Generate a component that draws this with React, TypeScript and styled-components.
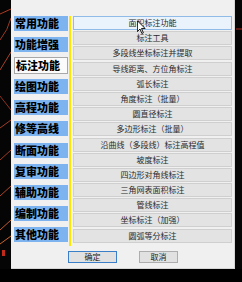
import React from 'react';
import styled, { createGlobalStyle } from 'styled-components';

const GlobalStyle = createGlobalStyle`
  html, body {
    margin: 0;
    padding: 0;
    background: #000;
    width: 242px;
    height: 282px;
    overflow: hidden;
  }
`;

const Screen = styled.div`
  display: flex;
  flex-direction: column;
  width: 242px;
  height: 282px;
  background: #000;
  position: relative;
`;

const Row = styled.div`
  display: flex;
  height: 269px;
`;

const SideCanvas = styled.svg`
  flex: none;
  display: block;
`;

const Dialog = styled.div`
  width: 224px;
  height: 269px;
  box-sizing: border-box;
  background: #f0f0f0;
  border-right: 1px solid #d6d6d6;
  border-bottom: 1px solid #d6d6d6;
  display: flex;
  flex-direction: column;
  padding: 16px 2px 0 3px;
  font-family: 'Noto Sans CJK SC', 'Noto Sans', sans-serif;
`;

const Body = styled.div`
  display: flex;
  align-items: flex-start;
`;

const TabColumn = styled.div`
  width: 54px;
  display: flex;
  flex-direction: column;
  gap: 6.1px;
`;

const Tab = styled.div<{ $active?: boolean }>`
  height: ${(p) => (p.$active ? '17px' : '15px')};
  margin: ${(p) => (p.$active ? '-1px 0' : '0')};
  box-sizing: border-box;
  background: ${(p) => (p.$active ? '#fbfbfb' : '#7db4ef')};
  border: ${(p) => (p.$active ? '1px solid #a8a8a8' : 'none')};
  display: flex;
  align-items: center;
  padding-left: 1px;
  font-size: 11px;
  font-weight: 900;
  color: #000;
  line-height: 1;
  white-space: nowrap;
`;

const Divider = styled.div`
  width: 2px;
  height: 230px;
  background: #ffe600;
  margin: 0 2px 0 1px;
`;

const ButtonColumn = styled.div`
  width: 159px;
  display: flex;
  flex-direction: column;
  gap: 1.2px;
`;

const FuncButton = styled.div<{ $hover?: boolean }>`
  height: 14px;
  box-sizing: border-box;
  background: ${(p) => (p.$hover ? '#eaf3fb' : '#e3e3e3')};
  border: 1px solid ${(p) => (p.$hover ? '#8fbbe6' : '#cfcfcf')};
  display: flex;
  align-items: center;
  justify-content: center;
  font-size: 8px;
  color: #2a2a2a;
  line-height: 1;
  white-space: nowrap;
`;

const Footer = styled.div`
  display: flex;
  gap: 22px;
  padding-left: 54px;
  margin-top: 5px;
`;

const DialogButton = styled.div<{ $primary?: boolean; $w: number }>`
  width: ${(p) => p.$w}px;
  height: 12px;
  box-sizing: border-box;
  background: #e1e1e1;
  border: 1px solid ${(p) => (p.$primary ? '#3b7fc8' : '#adadad')};
  display: flex;
  align-items: center;
  justify-content: center;
  font-size: 8px;
  color: #222;
  line-height: 1;
`;

const Cursor = styled.svg`
  position: absolute;
  left: 137px;
  top: 20px;
`;

const tabs = [
  '常用功能',
  '功能增强',
  '标注功能',
  '绘图功能',
  '高程功能',
  '修等高线',
  '断面功能',
  '复审功能',
  '辅助功能',
  '编制功能',
  '其他功能',
];

const funcs = [
  '面积标注功能',
  '标注工具',
  '多段线坐标标注并提取',
  '导线距离、方位角标注',
  '弧长标注',
  '角度标注（批量）',
  '圆直径标注',
  '多边形标注（批量）',
  '沿曲线（多段线）标注高程值',
  '坡度标注',
  '四边形对角线标注',
  '三角网表面积标注',
  '管线标注',
  '坐标标注（加强）',
  '圆弧等分标注',
];

export default function App() {
  return (
    <Screen>
      <GlobalStyle />
      <Row>
        <SideCanvas width="11" height="269" viewBox="0 0 11 269">
          <rect width="11" height="269" fill="#050505" />
          <path d="M0 14 L11 9" stroke="#b23a1e" strokeWidth="1" fill="none" />
          <path d="M0 40 Q8 30 11 18" stroke="#9c3a22" strokeWidth="1" fill="none" />
          <path d="M0 70 L11 52" stroke="#a8422a" strokeWidth="1" fill="none" />
          <path d="M0 96 L11 110" stroke="#8d3320" strokeWidth="1" fill="none" />
          <path d="M0 128 L11 120" stroke="#a33c26" strokeWidth="1" fill="none" />
          <path d="M0 160 L11 150" stroke="#a03a24" strokeWidth="1" fill="none" />
          <path d="M0 196 L11 186" stroke="#b0452a" strokeWidth="1" fill="none" />
          <path d="M0 230 L11 220" stroke="#c45a2c" strokeWidth="1" fill="none" />
          <path d="M0 244 L11 236" stroke="#c8662c" strokeWidth="1" fill="none" />
          <rect x="2" y="250" width="3" height="6" fill="#c02a1a" />
        </SideCanvas>
        <Dialog>
          <Body>
            <TabColumn>
              {tabs.map((t, i) => (
                <Tab key={t} $active={i === 2}>
                  {t}
                </Tab>
              ))}
            </TabColumn>
            <Divider />
            <ButtonColumn>
              {funcs.map((f, i) => (
                <FuncButton key={f} $hover={i === 0}>
                  {f}
                </FuncButton>
              ))}
            </ButtonColumn>
          </Body>
          <Footer>
            <DialogButton $primary $w={49}>
              确定
            </DialogButton>
            <DialogButton $w={39}>取消</DialogButton>
          </Footer>
        </Dialog>
        <SideCanvas width="7" height="269" viewBox="0 0 7 269">
          <rect width="7" height="269" fill="#050505" />
          <path d="M1 29 L7 29" stroke="#b02a20" strokeWidth="1" />
        </SideCanvas>
      </Row>
      <Cursor width="9" height="15" viewBox="0 0 12 19">
        <path
          d="M0.5 0.5 L0.5 15 L4 11.5 L6.5 17.5 L8.5 16.6 L6 10.8 L10.8 10.8 Z"
          fill="#fff"
          stroke="#000"
          strokeWidth="1.2"
        />
      </Cursor>
    </Screen>
  );
}
